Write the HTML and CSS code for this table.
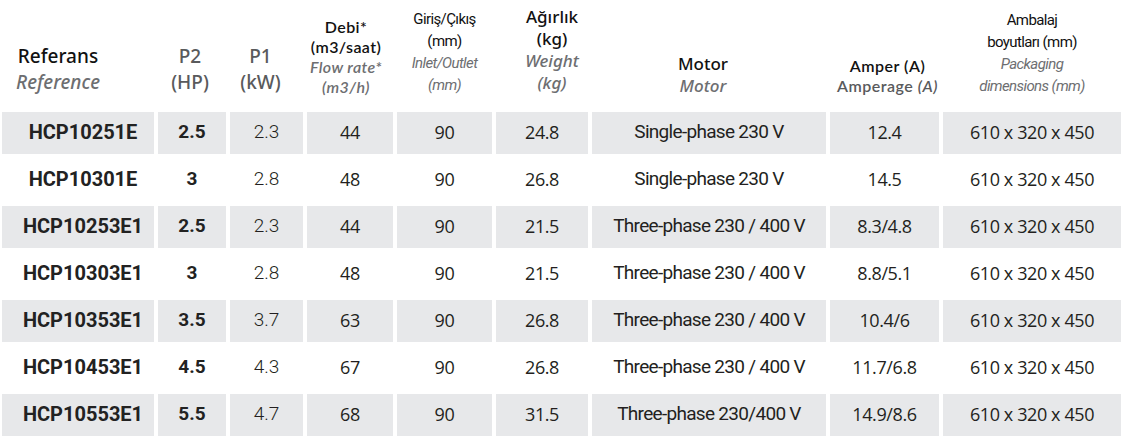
FILE: index.html
```html
<!DOCTYPE html>
<html lang="tr">

<head>
    <meta charset="UTF-8">
    <meta name="viewport" content="width=device-width, initial-scale=1.0">
    <title>HCP</title>
    <link rel="stylesheet" href="styles.css">
</head>

<body>
    <div class="table">
        <div class="row head">
            <div class="h h-ref">
                <span class="tr big">Referans</span>
                <span class="en big">Reference</span>
            </div>
            <div class="h h-p2">
                <span class="gr big">P2</span>
                <span class="gr big">(HP)</span>
            </div>
            <div class="h h-p1">
                <span class="gr big">P1</span>
                <span class="gr big">(kW)</span>
            </div>
            <div class="h h-debi">
                <span class="tr mid">Debi*</span>
                <span class="tr mid">(m3/saat)</span>
                <span class="en mid">Flow rate*</span>
                <span class="en mid">(m3/h)</span>
            </div>
            <div class="h h-giris">
                <span class="tr narrow">Giriş/Çıkış</span>
                <span class="tr narrow">(mm)</span>
                <span class="en narrow">Inlet/Outlet</span>
                <span class="en narrow">(mm)</span>
            </div>
            <div class="h h-agir">
                <span class="tr mid2">Ağırlık</span>
                <span class="tr mid2">(kg)</span>
                <span class="en mid2">Weight</span>
                <span class="en mid2">(kg)</span>
            </div>
            <div class="h h-motor">
                <span class="tr mid2">Motor</span>
                <span class="en mid2">Motor</span>
            </div>
            <div class="h h-amper">
                <span class="tr amp">Amper (A)</span>
                <span class="gr amp">Amperage <i>(A)</i></span>
            </div>
            <div class="h h-amb">
                <span class="tr narrow">Ambalaj</span>
                <span class="tr narrow">boyutları (mm)</span>
                <span class="en narrow">Packaging</span>
                <span class="en narrow">dimensions (mm)</span>
            </div>
        </div>

        <div class="row grey">
            <div class="c ref">HCP10251E</div>
            <div class="c p2">2.5</div>
            <div class="c p1">2.3</div>
            <div class="c num">44</div>
            <div class="c num">90</div>
            <div class="c num">24.8</div>
            <div class="c motor">Single-phase 230 V</div>
            <div class="c num">12.4</div>
            <div class="c num">610 x 320 x 450</div>
        </div>
        <div class="row">
            <div class="c ref">HCP10301E</div>
            <div class="c p2">3</div>
            <div class="c p1">2.8</div>
            <div class="c num">48</div>
            <div class="c num">90</div>
            <div class="c num">26.8</div>
            <div class="c motor">Single-phase 230 V</div>
            <div class="c num">14.5</div>
            <div class="c num">610 x 320 x 450</div>
        </div>
        <div class="row grey">
            <div class="c ref">HCP10253E1</div>
            <div class="c p2">2.5</div>
            <div class="c p1">2.3</div>
            <div class="c num">44</div>
            <div class="c num">90</div>
            <div class="c num">21.5</div>
            <div class="c motor">Three-phase 230 / 400 V</div>
            <div class="c num">8.3/4.8</div>
            <div class="c num">610 x 320 x 450</div>
        </div>
        <div class="row">
            <div class="c ref">HCP10303E1</div>
            <div class="c p2">3</div>
            <div class="c p1">2.8</div>
            <div class="c num">48</div>
            <div class="c num">90</div>
            <div class="c num">21.5</div>
            <div class="c motor">Three-phase 230 / 400 V</div>
            <div class="c num">8.8/5.1</div>
            <div class="c num">610 x 320 x 450</div>
        </div>
        <div class="row grey">
            <div class="c ref">HCP10353E1</div>
            <div class="c p2">3.5</div>
            <div class="c p1">3.7</div>
            <div class="c num">63</div>
            <div class="c num">90</div>
            <div class="c num">26.8</div>
            <div class="c motor">Three-phase 230 / 400 V</div>
            <div class="c num">10.4/6</div>
            <div class="c num">610 x 320 x 450</div>
        </div>
        <div class="row">
            <div class="c ref">HCP10453E1</div>
            <div class="c p2">4.5</div>
            <div class="c p1">4.3</div>
            <div class="c num">67</div>
            <div class="c num">90</div>
            <div class="c num">26.8</div>
            <div class="c motor">Three-phase 230 / 400 V</div>
            <div class="c num">11.7/6.8</div>
            <div class="c num">610 x 320 x 450</div>
        </div>
        <div class="row grey">
            <div class="c ref">HCP10553E1</div>
            <div class="c p2">5.5</div>
            <div class="c p1">4.7</div>
            <div class="c num">68</div>
            <div class="c num">90</div>
            <div class="c num">31.5</div>
            <div class="c motor">Three-phase 230/400 V</div>
            <div class="c num">14.9/8.6</div>
            <div class="c num">610 x 320 x 450</div>
        </div>
    </div>
</body>

</html>
```

FILE: styles.css
```css
body {
    margin: 0;
    background: white;
    color: #231f20;
    font-family: "Roboto", "Liberation Sans", sans-serif;
}

.table {
    width: 100%;
    padding-left: 2px;
    box-sizing: border-box;
}

.row {
    display: grid;
    grid-template-columns: 152px 68px 73px 86px 95px 92px 234px 109px 1fr;
    column-gap: 4px;
    height: 52px;
}

.row.grey {
    height: 42px;
}

.row.head {
    height: 112px;
}

/* header */
.h {
    display: flex;
    flex-direction: column;
    justify-content: flex-end;
    align-items: center;
    font-family: "Noto Sans", "Lato", sans-serif;
    padding-bottom: 13px;
    box-sizing: border-box;
}

.h span {
    display: block;
    white-space: nowrap;
}

.tr {
    color: #111;
}

.en {
    color: #6d6e71;
    font-style: italic;
}

.gr {
    color: #595a5c;
}

.gr i {
    font-style: italic;
}

.big {
    font-size: 19px;
    line-height: 26px;
    font-weight: 500;
}

.mid {
    font-family: "Lato", "Noto Sans", sans-serif;
    font-size: 16px;
    line-height: 20px;
    font-weight: 600;
    letter-spacing: 0.4px;
}

.mid2 {
    font-size: 17px;
    line-height: 22px;
    font-weight: 500;
}

.narrow {
    font-family: "Roboto", "Liberation Sans", sans-serif;
    font-size: 15px;
    line-height: 22px;
    letter-spacing: -0.6px;
}

.amp {
    font-family: "Lato", "Noto Sans", sans-serif;
    font-size: 16px;
    line-height: 20px;
    font-weight: 600;
    letter-spacing: 0.5px;
}

.h-ref {
    padding-right: 40px;
    padding-bottom: 17px;
}

.h-p2 {
    padding-right: 4px;
    padding-bottom: 17px;
}

.h-p1 {
    padding-right: 12px;
    padding-bottom: 17px;
}

.h-debi {
    padding-right: 8px;
    padding-bottom: 15px;
}

.h-giris {
    padding-bottom: 16px;
}

.h-agir {
    padding-left: 20px;
    padding-bottom: 18px;
}

.h-motor {
    padding-right: 12px;
    padding-bottom: 15px;
}

.h-amper {
    padding-left: 6px;
    padding-bottom: 16px;
}

.h-amb {
    padding-bottom: 15px;
}

/* body cells */
.c {
    display: flex;
    align-items: center;
    justify-content: center;
    font-size: 19px;
    white-space: nowrap;
    padding-bottom: 3px;
}

.grey .c {
    background: #e7e8ea;
}

.ref {
    font-size: 20px;
    font-weight: 700;
    padding-left: 10px;
    color: #222;
}

.p2 {
    font-weight: 700;
    color: #222;
}

.p1 {
    font-weight: 300;
}

.num {
    font-family: "Open Sans", "Liberation Sans", sans-serif;
    font-size: 18px;
    letter-spacing: -0.4px;
}

.motor {
    font-size: 19px;
    letter-spacing: -0.7px;
}
```
